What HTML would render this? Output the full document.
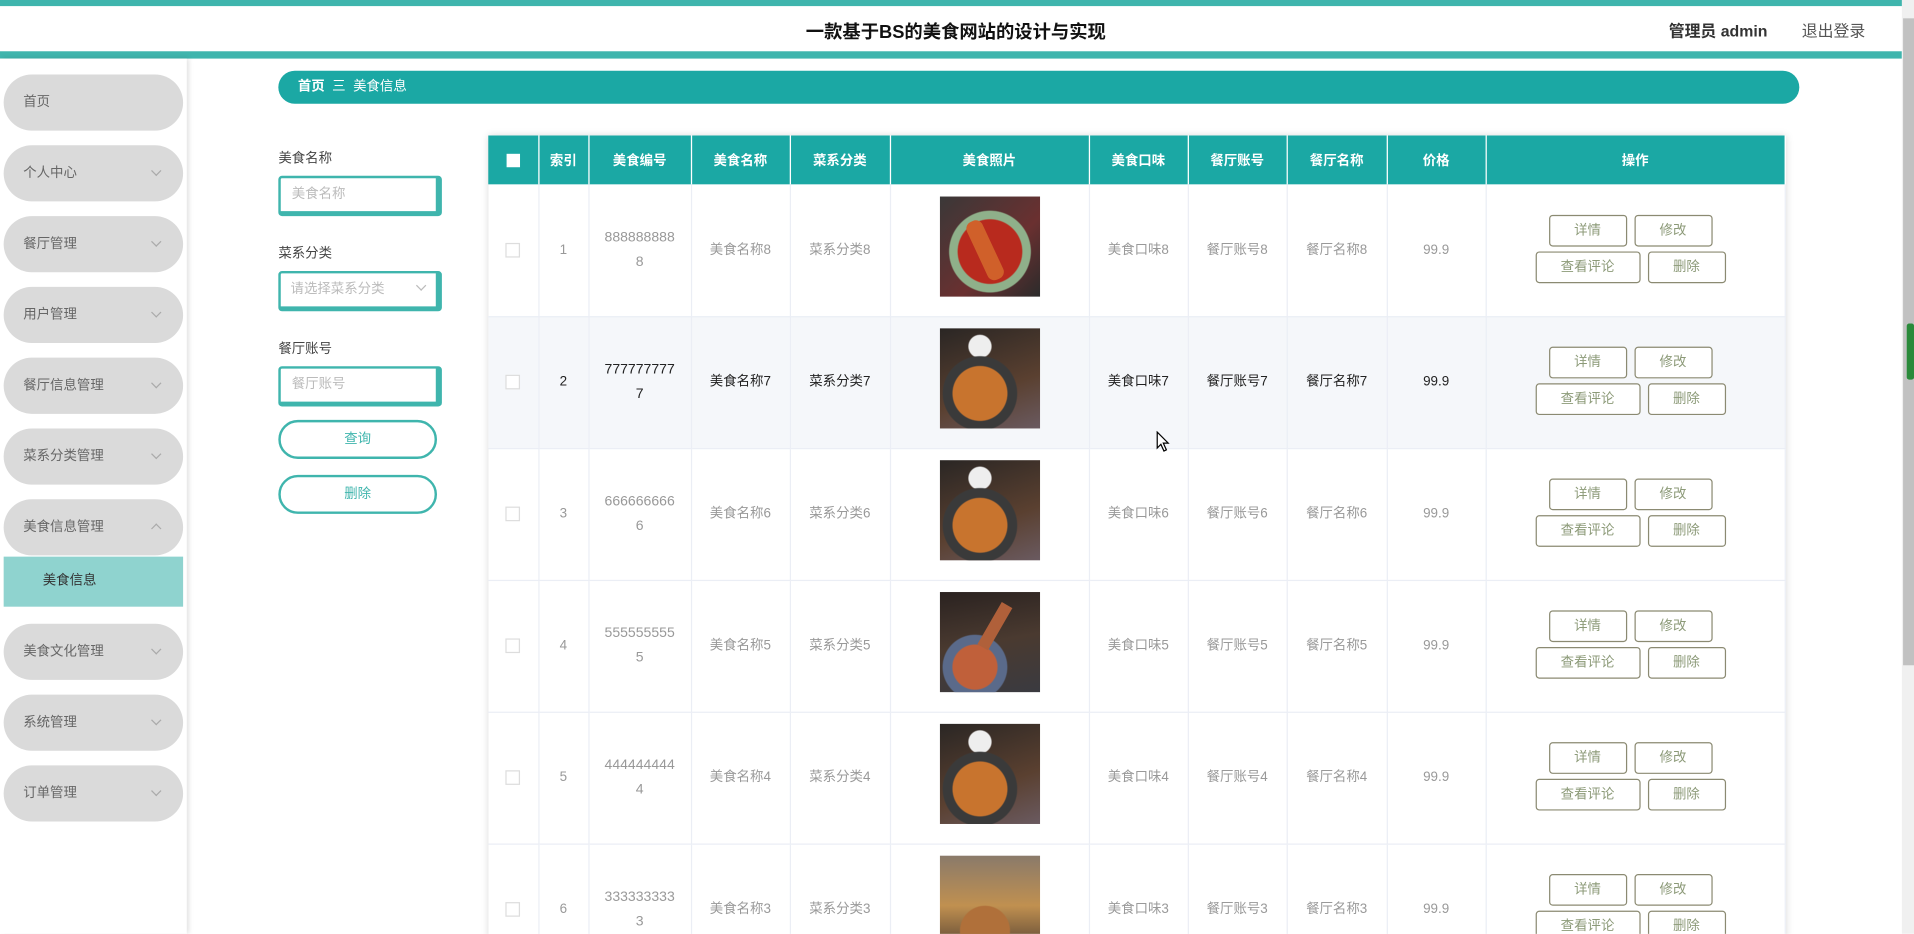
<!DOCTYPE html>
<html><head><meta charset="utf-8"><style>
*{margin:0;padding:0;box-sizing:border-box}
html,body{width:1914px;height:934px;overflow:hidden;background:#fff}
#w{position:absolute;left:0;top:0;width:1568px;height:765px;transform:scale(1.2207);transform-origin:0 0;font-family:"Liberation Sans","Noto Sans CJK SC",sans-serif;overflow:hidden}
.a{position:absolute}
.pill{position:absolute;left:3px;width:147px;height:46px;border-radius:23px;background:#dadada;color:#666;font-size:11px;line-height:46px;padding-left:16px}
.chev{position:absolute;left:122px;top:18px;width:6px;height:6px;border-right:1px solid #aaa;border-bottom:1px solid #aaa;transform:rotate(45deg)}
.lbl{position:absolute;left:228px;font-size:11px;color:#444}
.inp{position:absolute;left:228px;width:134px;height:33px;border:2px solid #3fb5ad;border-right-width:5px;border-bottom-width:4px;border-radius:3px;background:#fff;color:#bbb;font-size:11px;line-height:27px;padding-left:9px}
.btn{position:absolute;left:228px;width:130px;height:32px;border:2px solid #3fb5ad;border-radius:16px;color:#3fb5ad;font-size:11px;text-align:center;line-height:28px}
table{position:absolute;left:400px;top:111px;width:1062px;border-collapse:collapse;box-shadow:0 0 6px rgba(0,0,0,.15);table-layout:fixed}
th{background:#1ba8a4;color:#fff;font-size:11px;font-weight:bold;height:40px;border-right:1px solid #fff}
td{height:108px;border-right:1px solid #ebeef5;border-bottom:1px solid #ebeef5;text-align:center;font-size:11px;color:#999;line-height:20px;word-break:break-all;padding:0 10px}
td.n{padding:0 11px;font-size:11.5px}
tr.h td{background:#f5f7fa;color:#222}
.cb{display:inline-block;width:12px;height:12px;border:1px solid #ddd;background:#fff;vertical-align:middle}
th .cb{border:none;width:11px;height:11px}
.img{width:82px;height:82px;margin:0 auto;position:relative;top:-3px;overflow:hidden}
.ob{display:inline-block;border:1px solid #8b8a72;border-radius:3px;color:#8c9a78;font-size:11px;height:26px;line-height:24px;background:#fff;margin:2px 3px}
.ops{position:relative;left:-4px;top:-1px}
</style></head><body><div id="w">
<div class="a" style="left:0;top:0;width:1568px;height:5px;background:#3fb5ad"></div>
<div class="a" style="left:0;top:42px;width:1558px;height:6px;background:#3fb5ad"></div>
<div class="a" style="left:0;top:15px;width:1566px;text-align:center;font-size:15px;font-weight:bold;color:#111">一款基于BS的美食网站的设计与实现</div>
<div class="a" style="left:1367px;top:15px;font-size:13px;font-weight:bold;color:#333">管理员 admin</div>
<div class="a" style="left:1476px;top:15px;font-size:13px;color:#555">退出登录</div>
<div class="a" style="left:1558px;top:0;width:10px;height:765px;background:#f0f0f0"></div>
<div class="a" style="left:1559px;top:15px;width:9px;height:530px;background:#c1c1c1"></div>
<div class="a" style="left:1562px;top:265px;width:6px;height:46px;background:#2a8a3a;border-radius:2px"></div>
<div class="a" style="left:0;top:48px;width:153px;height:717px;background:#fff;box-shadow:2px 0 4px rgba(0,0,0,.12)"></div>
<div class="pill" style="top:61px">首页</div>
<div class="pill" style="top:119px">个人中心<i class="chev"></i></div>
<div class="pill" style="top:177px">餐厅管理<i class="chev"></i></div>
<div class="pill" style="top:235px">用户管理<i class="chev"></i></div>
<div class="pill" style="top:293px">餐厅信息管理<i class="chev"></i></div>
<div class="pill" style="top:351px">菜系分类管理<i class="chev"></i></div>
<div class="pill" style="top:409px">美食信息管理<i class="chev" style="transform:rotate(-135deg);top:21px"></i></div>
<div class="a" style="left:3px;top:456px;width:147px;height:41px;background:#8fd3cf;color:#333;font-size:11px;line-height:41px;padding-left:32px">美食信息</div>
<div class="pill" style="top:511px">美食文化管理<i class="chev"></i></div>
<div class="pill" style="top:569px">系统管理<i class="chev"></i></div>
<div class="pill" style="top:627px">订单管理<i class="chev"></i></div>
<div class="a" style="left:228px;top:58px;width:1246px;height:27px;border-radius:14px;background:#1ba8a4;color:#fff;font-size:11px;line-height:27px;padding-left:16px"><b>首页</b>&nbsp; 三 &nbsp;<b style="font-weight:normal">美食信息</b></div>
<div class="lbl" style="top:121px">美食名称</div>
<div class="inp" style="top:144px">美食名称</div>
<div class="lbl" style="top:199px">菜系分类</div>
<div class="inp" style="top:222px;padding-left:8px">请选择菜系分类<i class="chev" style="left:112px;top:7px;border-color:#bbb"></i></div>
<div class="lbl" style="top:277px">餐厅账号</div>
<div class="inp" style="top:300px">餐厅账号</div>
<div class="btn" style="top:344px">查询</div>
<div class="btn" style="top:389px">删除</div>
<table>
<colgroup><col style="width:41px"><col style="width:41px"><col style="width:84px"><col style="width:81px"><col style="width:82px"><col style="width:163px"><col style="width:81px"><col style="width:81px"><col style="width:82px"><col style="width:81px"><col style="width:245px"></colgroup>
<tr><th><span class="cb"></span></th><th>索引</th><th>美食编号</th><th>美食名称</th><th>菜系分类</th><th>美食照片</th><th>美食口味</th><th>餐厅账号</th><th>餐厅名称</th><th>价格</th><th>操作</th></tr>
<tr><td><span class="cb"></span></td><td>1</td><td class="n">8888888888</td><td>美食名称8</td><td>菜系分类8</td><td><div class="img" style="background:radial-gradient(circle at 50% 55%,#b82a1e 0 26px,#8fb08a 27px 33px,transparent 34px),linear-gradient(135deg,#3a3838,#6a3030 60%,#2b2b2b)"><div class="a" style="left:30px;top:18px;width:14px;height:52px;background:#d0602a;transform:rotate(-25deg);border-radius:6px"></div></div></td><td>美食口味8</td><td>餐厅账号8</td><td>餐厅名称8</td><td>99.9</td><td><div class="ops"><span class="ob" style="width:64px">详情</span><span class="ob" style="width:64px">修改</span><br><span class="ob" style="width:86px">查看评论</span><span class="ob" style="width:64px">删除</span></div></td></tr>
<tr class="h"><td><span class="cb"></span></td><td>2</td><td class="n">7777777777</td><td>美食名称7</td><td>菜系分类7</td><td><div class="img" style="background:radial-gradient(circle at 40% 65%,#c8742e 0 22px,#3a3a3a 23px 30px,transparent 31px),radial-gradient(circle at 40% 18%,#eee 0 9px,transparent 10px),linear-gradient(160deg,#2a2624,#5a4030 60%,#6a5a60)"></div></td><td>美食口味7</td><td>餐厅账号7</td><td>餐厅名称7</td><td>99.9</td><td><div class="ops"><span class="ob" style="width:64px">详情</span><span class="ob" style="width:64px">修改</span><br><span class="ob" style="width:86px">查看评论</span><span class="ob" style="width:64px">删除</span></div></td></tr>
<tr><td><span class="cb"></span></td><td>3</td><td class="n">6666666666</td><td>美食名称6</td><td>菜系分类6</td><td><div class="img" style="background:radial-gradient(circle at 40% 65%,#c8742e 0 22px,#3a3a3a 23px 30px,transparent 31px),radial-gradient(circle at 40% 18%,#eee 0 9px,transparent 10px),linear-gradient(160deg,#2a2624,#5a4030 60%,#6a5a60)"></div></td><td>美食口味6</td><td>餐厅账号6</td><td>餐厅名称6</td><td>99.9</td><td><div class="ops"><span class="ob" style="width:64px">详情</span><span class="ob" style="width:64px">修改</span><br><span class="ob" style="width:86px">查看评论</span><span class="ob" style="width:64px">删除</span></div></td></tr>
<tr><td><span class="cb"></span></td><td>4</td><td class="n">5555555555</td><td>美食名称5</td><td>菜系分类5</td><td><div class="img" style="background:radial-gradient(circle at 35% 75%,#c0603a 0 18px,#5a6a8a 19px 26px,transparent 27px),linear-gradient(170deg,#2a2220,#4a3a30 50%,#3a3a40)"><div class="a" style="left:40px;top:8px;width:10px;height:40px;background:#b0603a;transform:rotate(30deg)"></div></div></td><td>美食口味5</td><td>餐厅账号5</td><td>餐厅名称5</td><td>99.9</td><td><div class="ops"><span class="ob" style="width:64px">详情</span><span class="ob" style="width:64px">修改</span><br><span class="ob" style="width:86px">查看评论</span><span class="ob" style="width:64px">删除</span></div></td></tr>
<tr><td><span class="cb"></span></td><td>5</td><td class="n">4444444444</td><td>美食名称4</td><td>菜系分类4</td><td><div class="img" style="background:radial-gradient(circle at 40% 65%,#c8742e 0 22px,#3a3a3a 23px 30px,transparent 31px),radial-gradient(circle at 40% 18%,#eee 0 9px,transparent 10px),linear-gradient(160deg,#2a2624,#5a4030 60%,#6a5a60)"></div></td><td>美食口味4</td><td>餐厅账号4</td><td>餐厅名称4</td><td>99.9</td><td><div class="ops"><span class="ob" style="width:64px">详情</span><span class="ob" style="width:64px">修改</span><br><span class="ob" style="width:86px">查看评论</span><span class="ob" style="width:64px">删除</span></div></td></tr>
<tr><td><span class="cb"></span></td><td>6</td><td class="n">3333333333</td><td>美食名称3</td><td>菜系分类3</td><td><div class="img" style="background:radial-gradient(circle at 45% 75%,#b0703a 0 20px,transparent 21px),linear-gradient(180deg,#8a7a6a,#c09050 50%,#4a3a30)"></div></td><td>美食口味3</td><td>餐厅账号3</td><td>餐厅名称3</td><td>99.9</td><td><div class="ops"><span class="ob" style="width:64px">详情</span><span class="ob" style="width:64px">修改</span><br><span class="ob" style="width:86px">查看评论</span><span class="ob" style="width:64px">删除</span></div></td></tr>
</table>
<svg class="a" style="left:947px;top:353px" width="12" height="18" viewBox="0 0 12 18"><path d="M1 1 L1 14 L4 11 L6.5 16.5 L8.5 15.5 L6 10 L10 10 Z" fill="#fff" stroke="#000" stroke-width="1"/></svg>
</div></body></html>
